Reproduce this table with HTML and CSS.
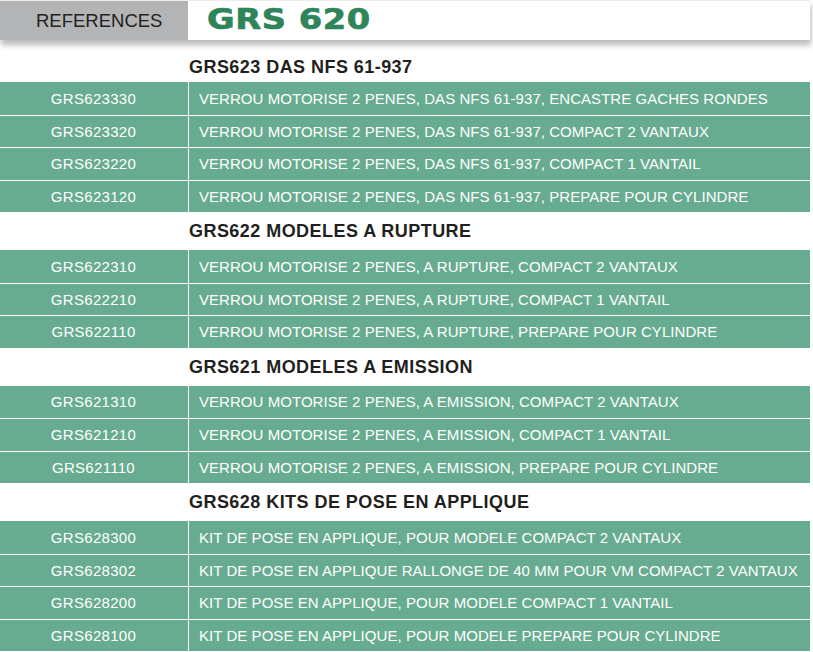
FILE: index.html
```html
<!DOCTYPE html>
<html lang="fr">
<head>
<meta charset="utf-8">
<title>GRS 620</title>
<link rel="stylesheet" href="styles.css">
</head>
<body>
<div class="page">
  <header class="header">
    <div class="header-ref">REFERENCES</div>
    <div class="header-title"><span class="logo">GRS 620</span></div>
  </header>

  <h2 class="section-title first">GRS623 DAS NFS 61-937</h2>
  <div class="table">
    <div class="row"><div class="code">GRS623330</div><div class="desc">VERROU MOTORISE 2 PENES, DAS NFS 61-937, ENCASTRE GACHES RONDES</div></div>
    <div class="row"><div class="code">GRS623320</div><div class="desc">VERROU MOTORISE 2 PENES, DAS NFS 61-937, COMPACT 2 VANTAUX</div></div>
    <div class="row"><div class="code">GRS623220</div><div class="desc">VERROU MOTORISE 2 PENES, DAS NFS 61-937, COMPACT 1 VANTAIL</div></div>
    <div class="row"><div class="code">GRS623120</div><div class="desc">VERROU MOTORISE 2 PENES, DAS NFS 61-937, PREPARE POUR CYLINDRE</div></div>
  </div>

  <h2 class="section-title">GRS622 MODELES A RUPTURE</h2>
  <div class="table">
    <div class="row"><div class="code">GRS622310</div><div class="desc">VERROU MOTORISE 2 PENES, A RUPTURE, COMPACT 2 VANTAUX</div></div>
    <div class="row"><div class="code">GRS622210</div><div class="desc">VERROU MOTORISE 2 PENES, A RUPTURE, COMPACT 1 VANTAIL</div></div>
    <div class="row"><div class="code">GRS622110</div><div class="desc">VERROU MOTORISE 2 PENES, A RUPTURE, PREPARE POUR CYLINDRE</div></div>
  </div>

  <h2 class="section-title">GRS621 MODELES A EMISSION</h2>
  <div class="table">
    <div class="row"><div class="code">GRS621310</div><div class="desc">VERROU MOTORISE 2 PENES, A EMISSION, COMPACT 2 VANTAUX</div></div>
    <div class="row"><div class="code">GRS621210</div><div class="desc">VERROU MOTORISE 2 PENES, A EMISSION, COMPACT 1 VANTAIL</div></div>
    <div class="row"><div class="code">GRS621110</div><div class="desc">VERROU MOTORISE 2 PENES, A EMISSION, PREPARE POUR CYLINDRE</div></div>
  </div>

  <h2 class="section-title">GRS628 KITS DE POSE EN APPLIQUE</h2>
  <div class="table">
    <div class="row"><div class="code">GRS628300</div><div class="desc">KIT DE POSE EN APPLIQUE, POUR MODELE COMPACT 2 VANTAUX</div></div>
    <div class="row"><div class="code">GRS628302</div><div class="desc">KIT DE POSE EN APPLIQUE RALLONGE DE 40 MM POUR VM COMPACT 2 VANTAUX</div></div>
    <div class="row"><div class="code">GRS628200</div><div class="desc">KIT DE POSE EN APPLIQUE, POUR MODELE COMPACT 1 VANTAIL</div></div>
    <div class="row"><div class="code">GRS628100</div><div class="desc">KIT DE POSE EN APPLIQUE, POUR MODELE PREPARE POUR CYLINDRE</div></div>
  </div>
</div>
</body>
</html>
```

FILE: styles.css
```css
* { box-sizing: border-box; }

html, body {
  margin: 0;
  padding: 0;
  background: #ffffff;
}

body {
  font-family: "Liberation Sans", Arial, sans-serif;
  color: #231f20;
  overflow: hidden;
}

.page {
  width: 813px;
}

.header {
  display: flex;
  width: 810px;
  height: 40px;
  border-top: 1px solid #ececec;
  box-shadow: 1px 5px 6px rgba(0, 0, 0, 0.28);
  position: relative;
  z-index: 1;
}

.header-ref {
  width: 188px;
  background: #b3b4b6;
  font-size: 18.5px;
  line-height: 39px;
  padding-left: 36px;
  color: #231f20;
}

.header-title {
  flex: 1;
  background: #ffffff;
  display: flex;
  align-items: center;
  padding-left: 19px;
}

.logo {
  display: inline-block;
  font-family: "DejaVu Sans", sans-serif;
  font-weight: 700;
  font-size: 28px;
  line-height: 28px;
  letter-spacing: 0.5px;
  color: #2f855a;
  -webkit-text-stroke: 0.7px #2f855a;
  transform: scaleX(1.2);
  transform-origin: left center;
  margin-top: -2px;
}

.section-title {
  margin: 0;
  height: 38px;
  display: flex;
  align-items: flex-end;
  padding-left: 189px;
  padding-bottom: 10px;
  font-size: 18px;
  line-height: 17px;
  letter-spacing: 0.45px;
  font-weight: 700;
  color: #231f20;
}

.section-title.first {
  height: 42px;
  padding-bottom: 6px;
}

.table {
  width: 810px;
  background: #67ac90;
}

.row {
  display: grid;
  grid-template-columns: 189px 1fr;
  height: 32.5px;
  color: #ffffff;
  font-size: 15px;
}

.row + .row {
  border-top: 1px solid #ffffff;
}

.code {
  display: flex;
  align-items: center;
  justify-content: center;
  border-right: 1px solid #ffffff;
  padding-right: 1px;
  letter-spacing: 0.3px;
}

.desc {
  display: flex;
  align-items: center;
  padding-left: 10px;
  white-space: nowrap;
  letter-spacing: 0.05px;
}
```
